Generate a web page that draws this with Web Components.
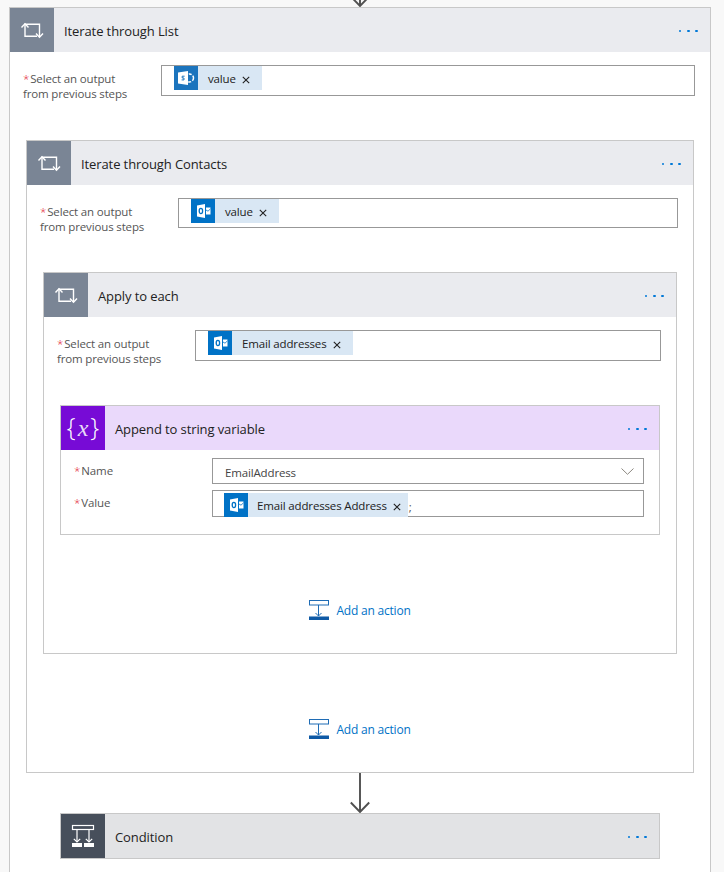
<!DOCTYPE html>
<html>
<head>
<meta charset="utf-8">
<title>Flow</title>
<style>
  html, body { margin: 0; height: 872px; overflow: hidden; }
  body { background: #f8f8f8; font-family: "Open Sans", "Liberation Sans", sans-serif; color: #333; }
  flow-page { display: block; }
</style>
</head>
<body>
<flow-page>
  <flow-arrow stub></flow-arrow>
  <flow-card title="Iterate through List" outer>
    <flow-field>
      <flow-token icon="sharepoint">value</flow-token>
    </flow-field>
    <flow-card title="Iterate through Contacts" nested>
      <flow-field short>
        <flow-token icon="outlook">value</flow-token>
      </flow-field>
      <flow-card title="Apply to each" nested>
        <flow-field>
          <flow-token icon="outlook">Email addresses</flow-token>
        </flow-field>
        <flow-card title="Append to string variable" kind="variable" nested>
          <flow-row label="Name" select>EmailAddress</flow-row>
          <flow-row label="Value" tokens>
            <flow-token icon="outlook" tight>Email addresses Address</flow-token><span style="margin-left:1px;color:#555;line-height:28px">;</span>
          </flow-row>
        </flow-card>
        <add-action></add-action>
      </flow-card>
      <add-action></add-action>
    </flow-card>
    <flow-arrow></flow-arrow>
    <flow-card title="Condition" kind="condition"></flow-card>
  </flow-card>
</flow-page>

<script>
const ICONS = {
  loop: `<svg width="44" height="44" viewBox="0 0 44 44" fill="none" stroke="#fff" stroke-width="1.4">
    <path d="M15 15.5V28.2H27M15 16.2H29.5V29"/>
    <path d="M11.5 19.5L15 15.8L18.5 19.5M26 25.5L29.5 29.2L33 25.5"/></svg>`,
  variable: `<div class="vars"><span>{</span><i>x</i><span>}</span></div>`,
  condition: `<svg width="44" height="44" viewBox="0 0 44 44" fill="none" stroke="#fff" stroke-width="1.2">
    <rect x="11.5" y="11.5" width="21" height="4"/>
    <path d="M16 15.5V28M28 15.5V28"/>
    <path d="M12.8 24.8L16 28L19.2 24.8M24.8 24.8L28 28L31.2 24.8"/>
    <rect x="11" y="29" width="10" height="4" fill="#fff" stroke="none"/>
    <rect x="23" y="29" width="10" height="4" fill="#fff" stroke="none"/></svg>`
};

const TOKEN_ICONS = {
  outlook: `<svg width="24" height="24" viewBox="0 0 24 24">
    <rect width="24" height="24" fill="#0072c6"/>
    <path d="M6 6.5L14 5V19L6 17.5Z" fill="#fff"/>
    <ellipse cx="9.9" cy="12" rx="1.7" ry="2.6" fill="none" stroke="#0072c6" stroke-width="1.3"/>
    <path d="M15 8.5H19.5V15.5H15Z" fill="#fff"/>
    <path d="M15 11L17 12.2L19.5 9.8" fill="none" stroke="#0072c6" stroke-width=".8"/></svg>`,
  sharepoint: `<svg width="24" height="24" viewBox="0 0 24 24">
    <rect width="24" height="24" fill="#1b74bd"/>
    <path d="M4 6.5L14 5V19L4 17.5Z" fill="#fff"/>
    <path d="M10.6 10.2H8.2V12H10V13.9H7.6" fill="none" stroke="#1b74bd" stroke-width="1"/>
    <circle cx="15.5" cy="12" r="4" fill="none" stroke="#fff" stroke-width="1.5" stroke-dasharray="3 1.4"/></svg>`
};

class FlowPage extends HTMLElement {
  constructor() {
    super();
    this.attachShadow({ mode: "open" });
    this.shadowRoot.innerHTML = `
      <style>:host { display: block; padding: 0 13px 0 9px; }</style>
      <slot></slot>`;
  }
}

class FlowCard extends HTMLElement {
  constructor() {
    super();
    this.attachShadow({ mode: "open" });
    const kind = this.getAttribute("kind") || "loop";
    this.shadowRoot.innerHTML = `
      <style>
        :host {
          display: block;
          box-sizing: border-box;
          border: 1px solid #c8c8c8;
          background: #fff;
          --head: #eaebef;
          --tile: #7a8595;
        }
        :host([kind="variable"]) { --head: #ead9fb; --tile: #770bd6; }
        :host([kind="condition"]) { --head: #e2e3e5; --tile: #474f5b; width: 600px; margin: 0 auto; }
        :host([outer]) { padding-bottom: 20px; }
        :host([nested]) { margin: 44px 16px 0; }
        .head { display: flex; align-items: center; height: 44px; background: var(--head); }
        .tile { width: 44px; height: 44px; background: var(--tile); flex: none; }
        .tile svg { display: block; }
        .name { flex: 1; margin-left: 10px; padding-top: 1px; font-size: 13px; letter-spacing: -.1px; color: #222; }
        .dots { display: flex; gap: 5.7px; margin: 2px 12px 0 0; }
        .dots i { width: 2.6px; height: 2.6px; background: #0078d7; border-radius: 50%; }
        .vars { display: flex; height: 44px; align-items: center; justify-content: center; gap: 2px; color: #fff; }
        .vars span { font: 300 25px "Open Sans", sans-serif; line-height: 40px; position: relative; top: -2px; }
        .vars i { font: italic 24px "Liberation Serif", serif; opacity: .85; }
      </style>
      <div class="head">
        <div class="tile">${ICONS[kind]}</div>
        <div class="name">${this.getAttribute("title")}</div>
        <div class="dots"><i></i><i></i><i></i></div>
      </div>
      <slot></slot>`;
    this.removeAttribute("title");
  }
}

class FlowField extends HTMLElement {
  constructor() {
    super();
    this.attachShadow({ mode: "open" });
    const h = this.hasAttribute("short") ? 30 : 31;
    this.shadowRoot.innerHTML = `
      <style>
        :host { display: flex; height: ${h}px; margin: 13px 15px 0 13px; font-size: 11.5px; }
        .label { width: 138px; flex: none; line-height: 15px; padding-top: 6px; color: #555; letter-spacing: -.15px; }
        .star { color: #e00b1c; font-weight: 300; margin-right: 1px; }
        .box { flex: 1; box-sizing: border-box; height: ${h}px; border: 1px solid #989898; padding: 0 12px; display: flex; background: #fff; align-items: flex-start; }
      </style>
      <div class="label"><span class="star">*</span>Select an output<br>from previous steps</div>
      <div class="box"><slot></slot></div>`;
  }
}

class FlowRow extends HTMLElement {
  constructor() {
    super();
    this.attachShadow({ mode: "open" });
    const isSelect = this.hasAttribute("select");
    this.shadowRoot.innerHTML = `
      <style>
        :host { display: flex; margin: 8px 15px 0 13px; font-size: 11.5px; color: #444; }
        :host([tokens]) { margin-top: 6px; margin-bottom: 17px; }
        .label { width: 138px; flex: none; line-height: 16px; padding-top: 5px; color: #555; letter-spacing: -.1px; }
        .star { color: #e00b1c; font-weight: 300; margin-right: 1px; }
        .box { flex: 1; box-sizing: border-box; height: 26px; border: 1px solid #989898; padding: 0 9px 0 12px; display: flex; align-items: center; justify-content: space-between; letter-spacing: -.15px; }
        .val { padding-top: 2px; }
        :host([tokens]) .box { height: 27px; padding: 2px 11px 0; align-items: flex-start; justify-content: flex-start; }
        :host([tokens]) .val { padding-top: 0; display: flex; height: 24px; }
        svg { margin-top: 1px; }
      </style>
      <div class="label"><span class="star">*</span>${this.getAttribute("label")}</div>
      <div class="box"><div class="val"><slot></slot></div>
        ${isSelect ? `<svg width="13" height="7" viewBox="0 0 13 7" fill="none" stroke="#8c8880"><path d="M.5 .5L6.5 6.3L12.5 .5"/></svg>` : ""}
      </div>`;
  }
}

class FlowToken extends HTMLElement {
  constructor() {
    super();
    this.attachShadow({ mode: "open" });
    this.shadowRoot.innerHTML = `
      <style>
        :host { display: inline-flex; height: 24px; background: #d9e7f4; font-size: 11.5px; color: #222; align-items: center; vertical-align: top; letter-spacing: -.15px; }
        svg { display: block; flex: none; }
        .text { margin: 0 10px; line-height: 26px; height: 24px; }
        .close { margin: 4px 12px 0 -4px; }
        :host([tight]) .text { margin-left: 9px; }
        :host([tight]) .close { margin-right: 7px; }
      </style>
      ${TOKEN_ICONS[this.getAttribute("icon")]}
      <span class="text"><slot></slot></span>
      <svg class="close" width="8" height="8" viewBox="0 0 8 8" fill="none" stroke="#222" stroke-width="1.1"><path d="M.8 .8L7.2 7.2M7.2 .8L.8 7.2"/></svg>`;
  }
}

class AddAction extends HTMLElement {
  constructor() {
    super();
    this.attachShadow({ mode: "open" });
    this.shadowRoot.innerHTML = `
      <style>
        :host { display: flex; justify-content: center; align-items: center; gap: 7px; height: 20px; padding: 65px 0 33px; font-size: 12px; color: #0072c6; letter-spacing: -.2px; }
        svg { display: block; }
      </style>
      <svg width="20" height="20" viewBox="0 0 20 20" fill="none" stroke="#1f6cb5" stroke-width="1">
        <rect x=".5" y=".5" width="19" height="4.5"/>
        <path d="M9.5 5V16M6.5 13L9.5 16L12.5 13"/>
        <rect x="0" y="16.5" width="20" height="3.5" fill="#0f5aa6" stroke="none"/>
      </svg>
      <span>Add an action</span>`;
  }
}

class FlowArrow extends HTMLElement {
  constructor() {
    super();
    this.attachShadow({ mode: "open" });
    this.shadowRoot.innerHTML = `
      <style>
        :host { display: flex; justify-content: center; align-items: flex-end; height: 40px; overflow: hidden; }
        :host([stub]) { height: 7px; }
        svg { display: block; flex: none; }
      </style>
      <svg width="20" height="40" viewBox="0 0 20 40" fill="none" stroke="#505050" stroke-width="1.9">
        <path d="M10 0V39M.8 29.5L10 39L19.2 29.5"/>
      </svg>`;
  }
}

customElements.define("flow-page", FlowPage);
customElements.define("flow-card", FlowCard);
customElements.define("flow-field", FlowField);
customElements.define("flow-row", FlowRow);
customElements.define("flow-token", FlowToken);
customElements.define("add-action", AddAction);
customElements.define("flow-arrow", FlowArrow);
</script>
</body>
</html>
